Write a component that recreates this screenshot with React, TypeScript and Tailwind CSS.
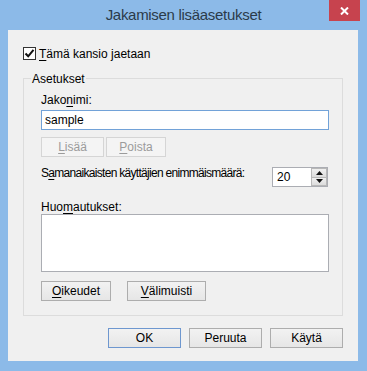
import React from 'react';

const font = { fontFamily: '"Liberation Sans", Arial, sans-serif' };

function U({ children }: { children: React.ReactNode }) {
  return <span className="underline underline-offset-[2px]">{children}</span>;
}

function Button({
  children,
  width,
  isDefault,
  disabled,
}: {
  children: React.ReactNode;
  width: string;
  isDefault?: boolean;
  disabled?: boolean;
}) {
  return (
    <button
      disabled={disabled}
      className={[
        'h-[20px] flex items-center justify-center text-[12px] leading-[14px] border',
        width,
        disabled
          ? 'border-[#d5d5d5] bg-[#f4f4f4] text-[#9b9b9b]'
          : isDefault
            ? 'border-[#6e97cf] bg-gradient-to-b from-[#f2f2f2] to-[#e6e6e6] text-black'
            : 'border-[#adadad] bg-gradient-to-b from-[#f2f2f2] to-[#e6e6e6] text-black',
      ].join(' ')}
    >
      {children}
    </button>
  );
}

export default function App() {
  return (
    <div className="w-[367px] h-[371px] bg-[#8cbae8] flex flex-col select-none" style={font}>
      {/* title bar */}
      <div className="h-[30px] grid grid-cols-[1fr_auto_1fr] shrink-0">
        <div />
        <div className="text-[15px] leading-[30px] tracking-[-0.3px] text-[#2b3a4a]">Jakamisen lisäasetukset</div>
        <div className="flex justify-end items-start pr-[7px]">
          <div className="w-[31px] h-[21px] bg-[#c7434e] flex items-center justify-center">
            <svg width="9" height="8" viewBox="0 0 9 8">
              <path d="M1 0.5 L8 7.5 M8 0.5 L1 7.5" stroke="white" strokeWidth="2" />
            </svg>
          </div>
        </div>
      </div>

      {/* client area */}
      <div className="ml-[8px] mr-[9px] h-[331px] bg-[#f0f0f0] flex flex-col pl-[15px] pt-[17px] text-[12px] leading-[14px] text-black">
        <div className="flex items-start gap-[3px]">
          <div className="w-[13px] h-[13px] border border-[#333] bg-white flex items-center justify-center">
            <svg width="11" height="11" viewBox="0 0 11 11">
              <path d="M1.5 5.5 L4.2 8.3 L9.5 1.8" fill="none" stroke="#111" strokeWidth="2" />
            </svg>
          </div>
          <span>
            <U>T</U>ämä kansio jaetaan
          </span>
        </div>

        {/* group box */}
        <div className="mt-[17px] w-[320px] border border-[#dcdcdc] flex flex-col pl-[17px] pb-[14px]">
          <div className="-mt-[7px] -ml-[10px] w-fit px-[1px] bg-[#f0f0f0]">Asetukset</div>

          <div className="mt-[7px]">
            Jako<U>n</U>imi:
          </div>
          <div className="mt-[3px] w-[288px] h-[20px] border border-[#72a2d8] bg-white flex items-center pl-[3px]">
            sample
          </div>

          <div className="mt-[7px] flex gap-[2px]">
            <Button width="w-[63px]" disabled>
              <U>L</U>isää
            </Button>
            <Button width="w-[60px]" disabled>
              <U>P</U>oista
            </Button>
          </div>

          <div className="mt-[9px] flex items-start">
            <div className="w-[231px] whitespace-nowrap tracking-[-0.7px]">
              S<U>a</U>manaikaisten käyttäjien enimmäismäärä:
            </div>
            <div className="mt-[1px] w-[56px] h-[20px] border border-[#abadb3] bg-white flex">
              <div className="flex-1 flex items-center pl-[4px]">20</div>
              <div className="w-[16px] flex flex-col">
                <div className="flex-1 bg-gradient-to-b from-[#f0f0f0] to-[#dcdcdc] border border-[#b8b8b8] flex items-center justify-center">
                  <svg width="7" height="4" viewBox="0 0 7 4">
                    <path d="M0 4 L3.5 0 L7 4 Z" fill="#111" />
                  </svg>
                </div>
                <div className="flex-1 bg-gradient-to-b from-[#f0f0f0] to-[#dcdcdc] border border-t-0 border-[#b8b8b8] flex items-center justify-center">
                  <svg width="7" height="4" viewBox="0 0 7 4">
                    <path d="M0 0 L7 0 L3.5 4 Z" fill="#111" />
                  </svg>
                </div>
              </div>
            </div>
          </div>

          <div className="mt-[13px]">
            Huo<U>m</U>autukset:
          </div>
          <div className="w-[288px] h-[58px] border border-[#abadb3] bg-white" />

          <div className="mt-[9px] flex gap-[16px]">
            <Button width="w-[70px]">
              <U>O</U>ikeudet
            </Button>
            <Button width="w-[79px]">
              <U>V</U>älimuisti
            </Button>
          </div>
        </div>

        {/* dialog buttons */}
        <div className="mt-[12px] w-[320px] flex justify-end gap-[8px]">
          <Button width="w-[73px]" isDefault>
            OK
          </Button>
          <Button width="w-[73px]">Peruuta</Button>
          <Button width="w-[73px]">Käytä</Button>
        </div>
      </div>
    </div>
  );
}
